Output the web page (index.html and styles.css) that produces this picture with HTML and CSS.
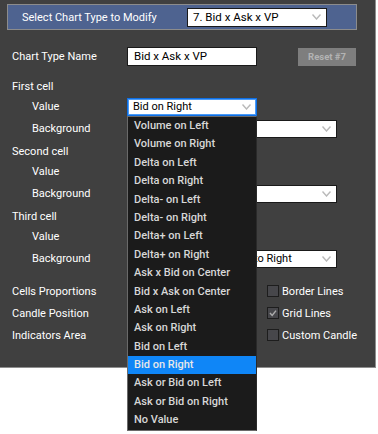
FILE: index.html
```html
<!DOCTYPE html>
<html lang="en">
<head>
    <meta charset="UTF-8">
    <title>Chart Type Settings</title>
    <link rel="stylesheet" href="styles.css">
</head>
<body>

<div class="page">
<div class="panel">
    <!-- Chart type picker -->
    <div class="header">
        <span>Select Chart Type to Modify</span>
        <div class="combo header-combo">
            <span>7. Bid x Ask x VP</span>
            <svg viewBox="0 0 9 6"><polyline points="0.5,0.5 4.5,5 8.5,0.5"/></svg>
        </div>
    </div>

    <div class="form">
        <div class="row name-row">
            <div class="label">Chart Type Name</div>
            <div class="field">Bid x Ask x VP</div>
            <button type="button" class="btn-reset">Reset #7</button>
        </div>

        <!-- First cell -->
        <div class="title first-title">First cell</div>
        <div class="row sub value-row">
            <div class="label">Value</div>
            <div class="combo focused">
                <span>Bid on Right</span>
                <svg viewBox="0 0 9 6"><polyline points="0.5,0.5 4.5,5 8.5,0.5"/></svg>
            </div>
        </div>
        <div class="row sub bg-row">
            <div class="label">Background</div>
            <div class="combo wide">
                <span></span>
                <svg viewBox="0 0 9 6"><polyline points="0.5,0.5 4.5,5 8.5,0.5"/></svg>
            </div>
        </div>

        <!-- Second cell -->
        <div class="title">Second cell</div>
        <div class="row sub value-row">
            <div class="label">Value</div>
            <div class="combo">
                <span></span>
            </div>
        </div>
        <div class="row sub bg-row">
            <div class="label">Background</div>
            <div class="combo wide">
                <span></span>
                <svg viewBox="0 0 9 6"><polyline points="0.5,0.5 4.5,5 8.5,0.5"/></svg>
            </div>
        </div>

        <!-- Third cell -->
        <div class="title">Third cell</div>
        <div class="row sub value-row">
            <div class="label">Value</div>
            <div class="combo">
                <span></span>
            </div>
        </div>
        <div class="row sub bg-row">
            <div class="label">Background</div>
            <div class="combo wide">
                <span>Bid x Ask Imbalance Bar to Right</span>
                <svg viewBox="0 0 9 6"><polyline points="0.5,0.5 4.5,5 8.5,0.5"/></svg>
            </div>
        </div>

        <!-- Options -->
        <div class="row option-row first-option">
            <div class="label">Cells Proportions</div>
            <div class="combo"></div>
            <div class="check"></div>
            <span class="check-label">Border Lines</span>
        </div>
        <div class="row option-row">
            <div class="label">Candle Position</div>
            <div class="combo"></div>
            <div class="check">
                <svg viewBox="0 0 10 10"><polyline points="2,5 4.2,7.4 8,2.6"/></svg>
            </div>
            <span class="check-label">Grid Lines</span>
        </div>
        <div class="row option-row">
            <div class="label">Indicators Area</div>
            <div class="combo"></div>
            <div class="check"></div>
            <span class="check-label">Custom Candle</span>
        </div>
    </div>

    <!-- Open dropdown of the first Value box -->
    <div class="list">
        <div class="item">Volume on Left</div>
        <div class="item">Volume on Right</div>
        <div class="item">Delta on Left</div>
        <div class="item">Delta on Right</div>
        <div class="item">Delta- on Left</div>
        <div class="item">Delta- on Right</div>
        <div class="item">Delta+ on Left</div>
        <div class="item">Delta+ on Right</div>
        <div class="item">Ask x Bid on Center</div>
        <div class="item">Bid x Ask on Center</div>
        <div class="item">Ask on Left</div>
        <div class="item">Ask on Right</div>
        <div class="item">Bid on Left</div>
        <div class="item active">Bid on Right</div>
        <div class="item">Ask or Bid on Left</div>
        <div class="item">Ask or Bid on Right</div>
        <div class="item">No Value</div>
    </div>
</div>
</div>

</body>
</html>
```
FILE: styles.css
```css
* {
    box-sizing: border-box;
}
html, body {
    margin: 0;
    background: #fff;
}
body {
    font-family: Roboto, "Liberation Sans", sans-serif;
    font-size: 11px;
}
.page {
    height: 434px;
}
.panel {
    position: relative;
    width: 376px;
    height: 368px;
    padding-top: 4px;
    background: #404040;
    border-right: 1px solid #8e8e8e;
    border-bottom: 1px solid #8e8e8e;
    color: #fff;
}
.header {
    display: flex;
    align-items: center;
    margin-left: 7px;
    width: 350px;
    height: 26px;
    padding-left: 14px;
    background: #4e6390;
    border: 1px solid #8c8c8c;
}
.combo {
    display: flex;
    align-items: center;
    width: 130px;
    height: 18px;
    padding: 0 5px;
    background: #fff;
    border: 1px solid #1a1a1a;
    color: #000;
}
.combo span {
    flex: 1;
    white-space: nowrap;
    overflow: hidden;
}
.combo svg {
    flex: none;
    width: 9px;
    height: 6px;
    margin-left: 4px;
    fill: none;
    stroke: #b9b9b9;
    stroke-width: 1.4;
}
.header-combo {
    margin-left: auto;
    margin-right: 29px;
    width: 140px;
    height: 19px;
    font-size: 11.5px;
}
.combo.wide {
    width: 210px;
}
.combo.focused {
    border-color: #0e6fe4;
    box-shadow: inset 0 0 0 1px #4b9bf7;
}
.form {
    margin-top: 16px;
    padding-left: 12px;
}
.row {
    display: flex;
    align-items: center;
}
.label {
    flex: none;
    width: 115px;
}
.sub .label {
    padding-left: 20px;
}
.name-row {
    height: 21px;
}
.field {
    width: 130px;
    height: 19px;
    padding-left: 6px;
    line-height: 17px;
    background: #fff;
    border: 1px solid #1a1a1a;
    color: #000;
    font-size: 11.5px;
}
.btn-reset {
    margin-left: 41px;
    width: 58px;
    height: 18px;
    padding: 0;
    background: #7e7e7e;
    border: none;
    color: #b3b3b3;
    font-family: Roboto, "Liberation Sans", sans-serif;
    font-size: 9.5px;
    font-weight: bold;
}
.title {
    display: flex;
    align-items: center;
    height: 20px;
}
.first-title {
    margin-top: 9px;
}
.value-row {
    height: 22px;
    padding-bottom: 1px;
}
.bg-row {
    height: 23px;
    padding-bottom: 2px;
}
.option-row {
    height: 22px;
}
.first-option {
    margin-top: 9px;
}
.check {
    display: flex;
    align-items: center;
    justify-content: center;
    margin-left: 10px;
    width: 12px;
    height: 12px;
    background: #47474b;
    border: 1px solid #1d1d1d;
}
.check svg {
    width: 10px;
    height: 10px;
    fill: none;
    stroke: #ababab;
    stroke-width: 1.5;
}
.check-label {
    margin-left: 3px;
}
.list {
    position: absolute;
    left: 127px;
    top: 116px;
    width: 130px;
    height: 315px;
    background: #1b1b1b;
    border: 1px solid #6a6a6a;
    border-right-color: #2a2a2a;
    z-index: 2;
}
.item {
    height: 18.4px;
    line-height: 18.4px;
    padding-left: 6px;
    color: #d7d7d7;
    font-weight: 500;
    white-space: nowrap;
}
.item.active {
    background: #0f86f7;
    color: #e8e8e8;
}
```
